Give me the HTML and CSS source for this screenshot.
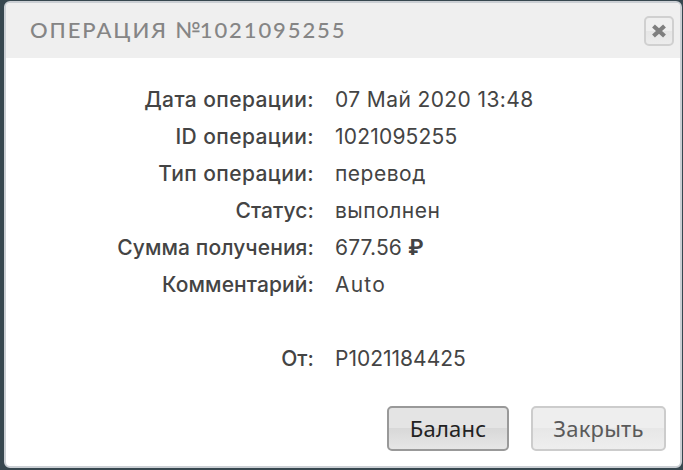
FILE: index.html
```
<!DOCTYPE html>
<html lang="ru">

	<head>
		<meta charset="UTF-8">
		<title>Операция №1021095255</title>
		<link rel="stylesheet" href="styles.css">
	</head>

	<body>
		<div class="dialog">
			<div class="dialog-head">
				<h1 class="dialog-title">ОПЕРАЦИЯ <span class="num">№</span>1021095255</h1>
				<button class="close" type="button" aria-label="Закрыть">
					<svg width="16" height="16" viewBox="0 0 16 16">
						<path d="M2.5 3L13.5 13M13.5 3L2.5 13" />
					</svg>
				</button>
			</div>
			<dl class="details">
				<dt class="wide">Дата операции:</dt>
				<dd class="date">07 Май 2020 13:48</dd>
				<dt class="wide">ID операции:</dt>
				<dd class="id">1021095255</dd>
				<dt class="wide">Тип операции:</dt>
				<dd class="type">перевод</dd>
				<dt>Статус:</dt>
				<dd class="status">выполнен</dd>
				<dt>Сумма получения:</dt>
				<dd class="sum">677.56 <span class="rub">₽</span></dd>
				<dt>Комментарий:</dt>
				<dd class="comment">Auto</dd>
				<dt class="from">От:</dt>
				<dd class="from">P1021184425</dd>
			</dl>
			<div class="buttons">
				<button class="btn btn-balance" type="button">Баланс</button>
				<button class="btn btn-close" type="button">Закрыть</button>
			</div>
		</div>
	</body>

</html>
```

FILE: styles.css
```
* {
	margin: 0;
	padding: 0;
	box-sizing: border-box;
}

body {
	height: 470px;
	padding: 1px 0 2px 4px;
	overflow: hidden;
	background: #37474f;
}

.dialog {
	width: 678px;
	height: 467px;
	display: flex;
	flex-direction: column;
	border: 2px solid #cbcfd4;
	border-radius: 6px;
	background: #fff;
}

.dialog-head {
	height: 55px;
	flex: none;
	display: flex;
	align-items: center;
	justify-content: space-between;
	padding: 0 6px 0 24px;
	border-radius: 4px 4px 0 0;
	background: #efefef;
}

.dialog-title {
	padding-bottom: 2px;
	font: 500 22px/28px Lato, "Open Sans", sans-serif;
	letter-spacing: 1.9px;
	white-space: nowrap;
	color: #858585;
}

.num {
	letter-spacing: -1px;
}

.close {
	width: 30px;
	height: 30px;
	display: flex;
	align-items: center;
	justify-content: center;
	border: 2px solid #d0d0d0;
	border-radius: 5px;
	background: linear-gradient(#efefef 50%, #e6e6e6 50%, #ececec);
}

.close path {
	fill: none;
	stroke: #7f7f7f;
	stroke-width: 4.2;
}

.details {
	flex: 1;
	display: grid;
	grid-template-columns: 308px 1fr;
	grid-auto-rows: 37px;
	align-content: start;
	column-gap: 21px;
	padding-top: 23px;
	font: 400 21px/37px Inter, "Open Sans", sans-serif;
	white-space: nowrap;
	color: #444;
}

.details dt {
	text-align: right;
	font-weight: 500;
	letter-spacing: 0.1px;
}

.details .wide {
	letter-spacing: 0.4px;
}

.date {
	letter-spacing: 0.4px;
}

.id {
	letter-spacing: 0.2px;
}

.type,
.status {
	letter-spacing: 0.5px;
}

.comment {
	letter-spacing: 1.2px;
}

.sum {
	letter-spacing: 0.15px;
}

.from {
	margin-top: 37px;
}

.rub {
	font-weight: 700;
}

.buttons {
	display: flex;
	justify-content: flex-end;
	gap: 22px;
	padding: 0 14px 15px 0;
}

.btn {
	height: 45px;
	padding-bottom: 2px;
	border: 2px solid #999;
	border-radius: 5px;
	background: linear-gradient(#e4e4e4 50%, #d8d8d8 50%, #e6e6e6);
	font: 22px/38px "Noto Sans", "Open Sans", sans-serif;
	letter-spacing: 0.2px;
	color: #222;
}

.btn-balance {
	width: 122px;
}

.btn-close {
	width: 135px;
	border-color: #ccc;
	background: linear-gradient(#eee 50%, #e7e7e7 50%, #eee);
	color: #5a5a5a;
}
```
